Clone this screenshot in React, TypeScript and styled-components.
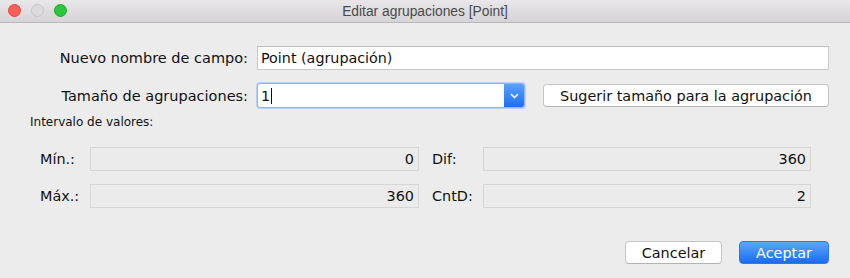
import React from "react";
import styled, { createGlobalStyle } from "styled-components";

const Global = createGlobalStyle`
  html, body { margin: 0; padding: 0; background: #ececec; }
  body { font-family: "DejaVu Sans", "Liberation Sans", sans-serif; color: #111; }
  * { box-sizing: border-box; }
`;

const Window = styled.div`
  width: 850px;
  height: 278px;
  background: #ececec;
  display: flex;
  flex-direction: column;
  overflow: hidden;
`;

const TitleBar = styled.div`
  position: relative;
  height: 23px;
  flex: none;
  display: flex;
  align-items: center;
  justify-content: center;
  background: linear-gradient(#e9e7e9, #d5d3d5);
  border-bottom: 1px solid #b9b7b9;
`;

const Lights = styled.div`
  position: absolute;
  left: 8px;
  top: 4px;
  display: flex;
  gap: 10px;
  align-items: center;
`;

const Light = styled.span<{ $c: string; $b: string }>`
  width: 13px;
  height: 13px;
  border-radius: 50%;
  background: ${(p) => p.$c};
  border: 1px solid ${(p) => p.$b};
`;

const Title = styled.div`
  font-family: "Liberation Sans", "Noto Sans", sans-serif;
  font-size: 13.8px;
  color: #4a4a4a;
`;

const Body = styled.div`
  flex: 1;
  display: flex;
  flex-direction: column;
  padding: 23px 21px 0 30px;
`;

const FormRow = styled.div<{ $mt?: number }>`
  display: grid;
  grid-template-columns: 218px 1fr;
  column-gap: 9px;
  align-items: center;
  margin-top: ${(p) => p.$mt ?? 0}px;
  height: 24px;
`;

const Label = styled.label`
  text-align: right;
  font-size: 14.5px;
  color: #111;
  white-space: nowrap;
`;

const TextInput = styled.div`
  height: 24px;
  background: #fff;
  border: 1px solid #c9c9c9;
  border-top-color: #bdbdbd;
  font-size: 14.3px;
  display: flex;
  align-items: center;
  padding-left: 3px;
`;

const ComboLine = styled.div`
  display: grid;
  grid-template-columns: 268px 1fr;
  column-gap: 18px;
  align-items: center;
`;

const Combo = styled.div`
  height: 25px;
  display: flex;
  border: 1px solid #8fb6ee;
  border-radius: 3px;
  background: #fff;
  box-shadow: 0 0 0 1px #b8d2f7;
  overflow: hidden;
`;

const ComboText = styled.div`
  flex: 1;
  display: flex;
  align-items: center;
  padding-left: 3px;
  font-size: 14.3px;
`;

const Caret = styled.span`
  display: inline-block;
  width: 1px;
  height: 16px;
  background: #111;
  margin-left: 1px;
`;

const ComboButton = styled.div`
  width: 20px;
  background: linear-gradient(#5aa2fb, #1d6ff0);
  display: flex;
  align-items: center;
  justify-content: center;
`;

const PushButton = styled.button<{ $primary?: boolean; $w?: number }>`
  height: 23px;
  width: ${(p) => (p.$w ? `${p.$w}px` : "auto")};
  border-radius: 4px;
  font-family: "DejaVu Sans", sans-serif;
  font-size: 14.4px;
  padding: 0;
  cursor: default;
  ${(p) =>
    p.$primary
      ? `background: linear-gradient(#5ea6fb, #1a6cf0);
         color: #fff;
         border: 1px solid #2a78ee;`
      : `background: #fff;
         color: #111;
         border: 1px solid #c4c4c4;
         border-bottom-color: #b3b3b3;`}
`;

const SectionLabel = styled.div`
  font-size: 12px;
  color: #111;
  margin-top: 8px;
  line-height: 14px;
`;

const StatsGrid = styled.div`
  display: grid;
  grid-template-columns: 50px 329px 13px 51px 328px;
  row-gap: 13px;
  margin-top: 18px;
  margin-left: 10px;
  align-items: center;
`;

const StatLabel = styled.div`
  font-size: 14.4px;
  color: #111;
`;

const StatField = styled.div`
  height: 24px;
  border: 1px solid #d6d6d6;
  background: #ebebeb;
  font-size: 14.4px;
  display: flex;
  align-items: center;
  justify-content: flex-end;
  padding-right: 4px;
`;

const Spacer = styled.div``;

const Footer = styled.div`
  display: flex;
  justify-content: flex-end;
  gap: 17px;
  margin-top: 33px;
`;

export default function App() {
  return (
    <Window>
      <Global />
      <TitleBar>
        <Lights>
          <Light $c="#fc5f57" $b="#e14640" />
          <Light $c="#dcdadc" $b="#c7c5c7" />
          <Light $c="#2ac73e" $b="#1eab2e" />
        </Lights>
        <Title>Editar agrupaciones [Point]</Title>
      </TitleBar>
      <Body>
        <FormRow>
          <Label>Nuevo nombre de campo:</Label>
          <TextInput>Point (agrupación)</TextInput>
        </FormRow>
        <FormRow $mt={13}>
          <Label>Tamaño de agrupaciones:</Label>
          <ComboLine>
            <Combo>
              <ComboText>
                1<Caret />
              </ComboText>
              <ComboButton>
                <svg width="9" height="6" viewBox="0 0 9 6">
                  <path d="M1 1l3.5 3.5L8 1" fill="none" stroke="#fff" strokeWidth="1.6" />
                </svg>
              </ComboButton>
            </Combo>
            <PushButton>Sugerir tamaño para la agrupación</PushButton>
          </ComboLine>
        </FormRow>
        <SectionLabel>Intervalo de valores:</SectionLabel>
        <StatsGrid>
          <StatLabel>Mín.:</StatLabel>
          <StatField>0</StatField>
          <Spacer />
          <StatLabel>Dif:</StatLabel>
          <StatField>360</StatField>
          <StatLabel>Máx.:</StatLabel>
          <StatField>360</StatField>
          <Spacer />
          <StatLabel>CntD:</StatLabel>
          <StatField>2</StatField>
        </StatsGrid>
        <Footer>
          <PushButton $w={97}>Cancelar</PushButton>
          <PushButton $primary $w={90}>Aceptar</PushButton>
        </Footer>
      </Body>
    </Window>
  );
}
